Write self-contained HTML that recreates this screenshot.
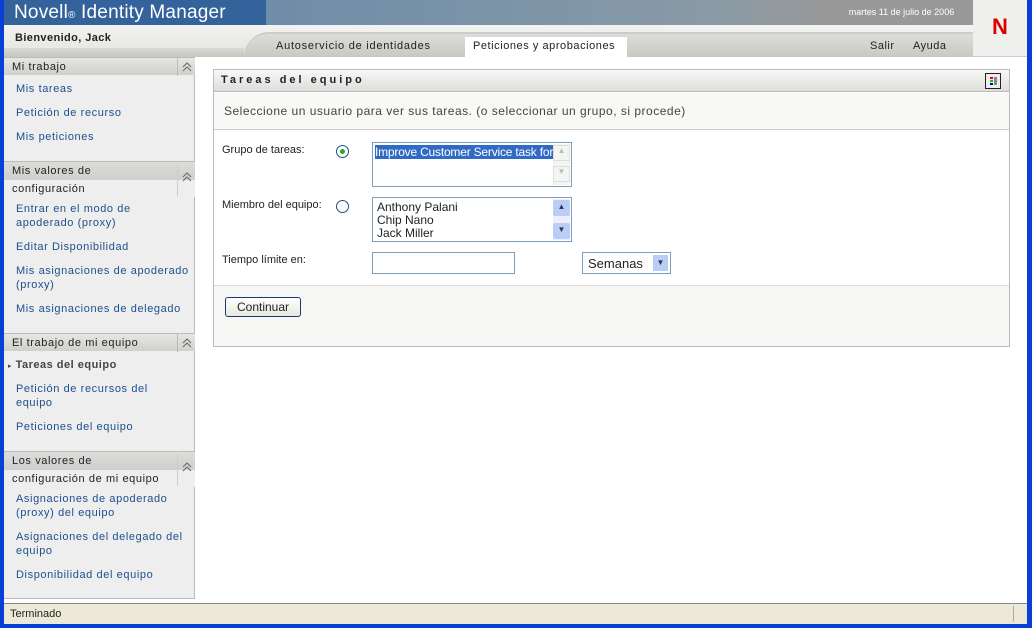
<!DOCTYPE html><html><head><meta charset="utf-8"><style>
*{margin:0;padding:0;box-sizing:border-box}
body{width:1032px;height:628px;position:relative;overflow:hidden;background:#fff;font-family:"Liberation Sans","DejaVu Sans",sans-serif;font-size:11px;color:#222}
.a{position:absolute}
.lk{position:absolute;left:16px;color:#1e4f8f;font-size:11px;line-height:14px;letter-spacing:.6px}
.sh{position:absolute;left:4px;width:191px;height:18px;background:linear-gradient(#e6e6e4,#cfcfcc);border-top:1px solid #bbb;color:#222;font-size:11px;padding:3px 0 0 8px;letter-spacing:.6px}
.sh2{height:auto;background:linear-gradient(#dcdcda 0,#cfcfcc 18px,#eeeeee 18px)}
.ch{position:absolute;right:0;top:0;width:18px;height:18px;border-left:1px solid #bbb}
.ch svg{position:absolute;left:4px;top:4px}
</style></head><body>
<div class="a" style="left:0;top:0;width:4px;height:628px;background:#0a3fd6"></div>
<div class="a" style="right:0;top:0;width:5px;height:628px;background:#0a3fd6"></div>
<div class="a" style="left:0;bottom:0;width:1032px;height:4px;background:#0a3fd6"></div>
<div class="a" style="left:4px;top:0;width:262px;height:25px;background:#33639a;color:#fff;font-size:19px;letter-spacing:.2px;padding:2px 0 0 10px">Novell<span style="font-size:10px">®</span> Identity Manager</div>
<div class="a" style="left:266px;top:0;width:564px;height:25px;background:linear-gradient(90deg,#6f8ca8,#7b94a8 40%,#8a9aa6 80%,#999)"></div>
<div class="a" style="left:830px;top:0;width:143px;height:25px;background:#999;color:#fff;font-size:9px;text-align:center;padding-top:7px">martes 11 de julio de 2006</div>
<div class="a" style="left:973px;top:0;width:54px;height:57px;background:#efefed;border-bottom:1px solid #ccc;color:#d00;font-weight:bold;font-size:22px;text-align:center;padding-top:14px">N</div>
<div class="a" style="left:4px;top:25px;width:969px;height:32px;background:linear-gradient(#f3f3f1,#e3e3e0);"></div>
<div class="a" style="left:4px;top:48px;width:240px;height:9px;background:linear-gradient(#d8d8d4,#c6c6c2)"></div>
<div class="a" style="left:244px;top:32px;width:729px;height:25px;background:linear-gradient(#dcdcd8,#c9c9c4);border-top:2px solid #ccc;border-radius:30px 0 0 0"></div>
<div class="a" style="left:15px;top:32px;font-weight:bold;font-size:11px;letter-spacing:.4px">Bienvenido, Jack</div>
<div class="a" style="left:276px;top:40px;font-size:11px;letter-spacing:.75px">Autoservicio de identidades</div>
<div class="a" style="left:465px;top:37px;width:162px;height:20px;background:#fff;font-size:11px;letter-spacing:.55px;padding:3px 0 0 8px">Peticiones y aprobaciones</div>
<div class="a" style="left:870px;top:40px;font-size:11px;letter-spacing:.5px">Salir</div>
<div class="a" style="left:913px;top:40px;font-size:11px;letter-spacing:.5px">Ayuda</div>
<div class="a" style="left:4px;top:57px;width:191px;height:542px;background:#eeeeee;border-right:1px solid #bbb;border-bottom:1px solid #bbb"></div>
<div class="sh" style="top:57px">Mi trabajo<div class="ch"><svg width="10" height="10"><path d="M1 5l4-4 4 4M1 9l4-4 4 4" fill="none" stroke="#666" stroke-width="1"/></svg></div></div>
<div class="lk" style="top:82px">Mis tareas</div>
<div class="lk" style="top:106px">Petición de recurso</div>
<div class="lk" style="top:130px">Mis peticiones</div>
<div class="sh sh2" style="top:161px;height:36px;line-height:18px;padding-top:0">Mis valores de<br>configuración<div class="ch" style="top:2px;height:32px;border-left-color:#ccc"><svg width="10" height="10" style="top:8px"><path d="M1 5l4-4 4 4M1 9l4-4 4 4" fill="none" stroke="#666"/></svg></div></div>
<div class="lk" style="top:202px">Entrar en el modo de<br>apoderado (proxy)</div>
<div class="lk" style="top:240px">Editar Disponibilidad</div>
<div class="lk" style="top:264px">Mis asignaciones de apoderado<br>(proxy)</div>
<div class="lk" style="top:302px">Mis asignaciones de delegado</div>
<div class="sh" style="top:333px">El trabajo de mi equipo<div class="ch"><svg width="10" height="10"><path d="M1 5l4-4 4 4M1 9l4-4 4 4" fill="none" stroke="#666"/></svg></div></div>
<div class="lk" style="top:358px;left:8px;color:#444;font-weight:bold;letter-spacing:.5px"><span style="font-size:7px">▸</span> Tareas del equipo</div>
<div class="lk" style="top:382px">Petición de recursos del<br>equipo</div>
<div class="lk" style="top:420px">Peticiones del equipo</div>
<div class="sh sh2" style="top:451px;height:36px;line-height:18px;padding-top:0">Los valores de<br>configuración de mi equipo<div class="ch" style="top:2px;height:32px;border-left-color:#ccc"><svg width="10" height="10" style="top:8px"><path d="M1 5l4-4 4 4M1 9l4-4 4 4" fill="none" stroke="#666"/></svg></div></div>
<div class="lk" style="top:492px">Asignaciones de apoderado<br>(proxy) del equipo</div>
<div class="lk" style="top:530px">Asignaciones del delegado del<br>equipo</div>
<div class="lk" style="top:568px">Disponibilidad del equipo</div>
<div class="a" style="left:213px;top:69px;width:797px;height:278px;border:1px solid #bbb;background:#fff"></div>
<div class="a" style="left:214px;top:70px;width:795px;height:22px;background:linear-gradient(#f8f8f6,#dddddb);border-bottom:1px solid #bbb;font-weight:bold;font-size:11px;letter-spacing:3px;padding:4px 0 0 7px">Tareas del equipo</div>
<div class="a" style="left:985px;top:73px;width:16px;height:16px;border:1px solid #222;background:#eee"><div class="a" style="left:4px;top:3px;width:3px;height:2px;background:#e00"></div><div class="a" style="left:4px;top:6px;width:3px;height:2px;background:#0c0"></div><div class="a" style="left:4px;top:9px;width:3px;height:2px;background:#00d"></div><div class="a" style="left:8px;top:3px;width:3px;height:8px;background:#888"></div></div>
<div class="a" style="left:214px;top:93px;width:795px;height:37px;background:#f8f8f6;border-bottom:1px solid #ccc;color:#444;font-size:12px;letter-spacing:.5px;padding:11px 0 0 10px">Seleccione un usuario para ver sus tareas. (o seleccionar un grupo, si procede)</div>
<div class="a" style="left:222px;top:144px">Grupo de tareas:</div>
<div class="a" style="left:336px;top:145px;width:13px;height:13px;border:1px solid #1c5180;border-radius:50%;background:#fff"><div class="a" style="left:3px;top:3px;width:5px;height:5px;border-radius:50%;background:#2a2"></div></div>
<div class="a" style="left:372px;top:142px;width:200px;height:45px;border:1px solid #7f9db9;background:#fff"><div class="a" style="left:2px;top:2px;width:178px;height:14px;background:#316ac5;color:#fff;font-size:12px;line-height:14px;white-space:nowrap;overflow:hidden;letter-spacing:-.2px">Improve Customer Service task force</div><div class="a" style="right:1px;top:1px;width:17px;height:41px;background:#f4f4f0"><div style="height:16px;margin-top:1px;border:1px solid #ddd;font-size:8px;text-align:center;color:#bbb">▲</div><div style="height:16px;margin-top:5px;border:1px solid #ddd;font-size:8px;text-align:center;color:#bbb">▼</div></div></div>
<div class="a" style="left:222px;top:199px">Miembro del equipo:</div>
<div class="a" style="left:336px;top:200px;width:13px;height:13px;border:1px solid #1c5180;border-radius:50%;background:#fff"></div>
<div class="a" style="left:372px;top:197px;width:200px;height:45px;border:1px solid #7f9db9;background:#fff;font-size:12px;line-height:13px;padding:3px 0 0 4px">Anthony Palani<br>Chip Nano<br>Jack Miller<div class="a" style="right:1px;top:1px;width:17px;height:41px;background:#eef"><div style="height:16px;margin-top:1px;background:#b9cdf7;border-radius:2px;font-size:8px;text-align:center;color:#335">▲</div><div style="height:16px;margin-top:7px;background:#b9cdf7;border-radius:2px;font-size:8px;text-align:center;color:#335">▼</div></div></div>
<div class="a" style="left:222px;top:254px">Tiempo límite en:</div>
<div class="a" style="left:372px;top:252px;width:143px;height:22px;border:1px solid #7f9db9;background:#fff"></div>
<div class="a" style="left:582px;top:252px;width:89px;height:22px;border:1px solid #7f9db9;background:#fff;font-size:13px;padding:3px 0 0 5px">Semanas<div class="a" style="right:2px;top:2px;width:15px;height:16px;background:#b9cdf7;font-size:8px;text-align:center;line-height:16px;color:#335">▼</div></div>
<div class="a" style="left:214px;top:285px;width:795px;height:61px;background:#f6f6f4;border-top:1px solid #ddd"></div>
<div class="a" style="left:225px;top:297px;width:76px;height:20px;border:1px solid #1c3a6a;border-radius:3px;background:linear-gradient(#fff,#e8e8e0);font-size:12px;text-align:center;line-height:18px">Continuar</div>
<div class="a" style="left:4px;top:603px;width:1023px;height:21px;background:#ece9d8;border-top:1px solid #888;padding:4px 0 0 6px;font-size:11px">Terminado</div>
<div class="a" style="left:1013px;top:606px;width:1px;height:16px;background:#fff;border-left:1px solid #aaa"></div>
</body></html>
